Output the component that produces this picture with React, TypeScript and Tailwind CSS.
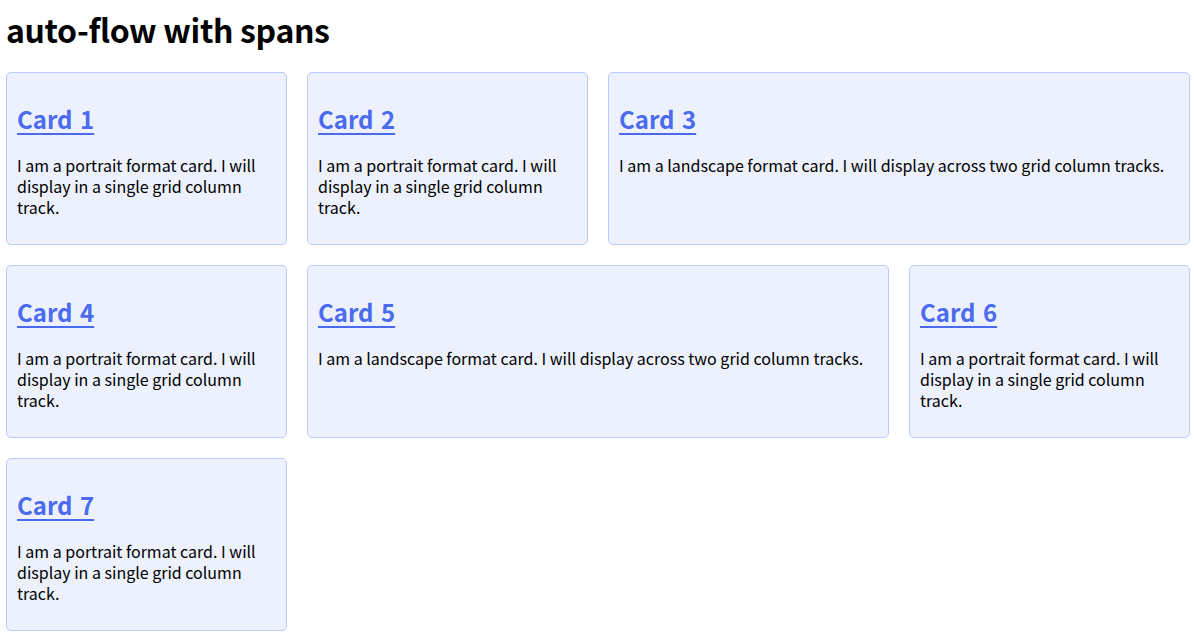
const cards = [
  { title: "Card 1", wide: false },
  { title: "Card 2", wide: false },
  { title: "Card 3", wide: true },
  { title: "Card 4", wide: false },
  { title: "Card 5", wide: true },
  { title: "Card 6", wide: false },
  { title: "Card 7", wide: false },
];

const portrait = "I am a portrait format card. I will display in a single grid column track.";
const landscape = "I am a landscape format card. I will display across two grid column tracks.";

export default function App() {
  return (
    <div className="min-h-screen bg-white pl-[6px] pr-[4px] text-black font-['Noto_Sans_CJK_KR','Noto_Sans',sans-serif]">
      <h1 className="pt-[8px] mb-[22px] text-[32px] leading-[42px] font-bold tracking-[-0.35px]">auto-flow with spans</h1>

      <div className="grid grid-cols-4 gap-[20px]">
        {cards.map((c) => (
          <div
            key={c.title}
            className={`rounded-[5px] border border-[#bccaf9] bg-[#ecf1fd] p-[10px] ${c.wide ? "col-span-2" : ""}`}
          >
            <h2 className="mt-[20px] mb-[20px] text-[24px] leading-[32px] font-bold">
              <a href="#" className="text-[#4b6bee] underline decoration-2 underline-offset-[4px] [word-spacing:2px]">
                {c.title}
              </a>
            </h2>
            <p className="mb-[16px] text-[16px] leading-[21px]">{c.wide ? landscape : portrait}</p>
          </div>
        ))}
      </div>
    </div>
  );
}
